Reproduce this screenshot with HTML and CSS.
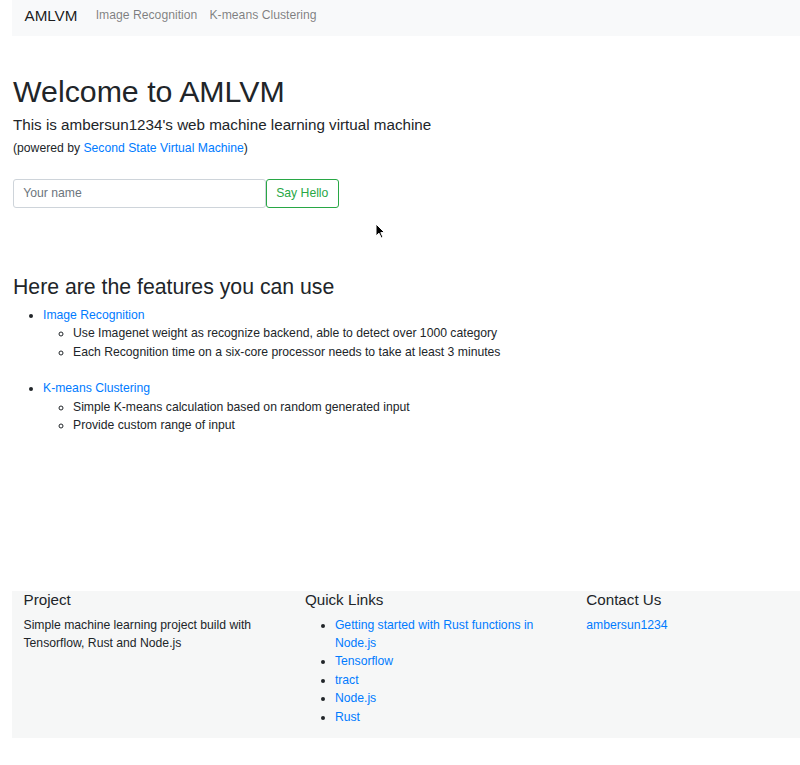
FILE: index.html
```html
<!DOCTYPE html>
<html lang="en">
<head>
<meta charset="utf-8">
<title>AMLVM</title>
<link rel="stylesheet" href="styles.css">
</head>
<body>
<div class="page">
  <nav class="navbar">
    <a class="brand" href="#">AMLVM</a>
    <a class="nav-link" href="#">Image Recognition</a>
    <a class="nav-link" href="#">K-means Clustering</a>
  </nav>

  <main class="main">
    <h1 class="title">Welcome to AMLVM</h1>
    <p class="lead">This is ambersun1234's web machine learning virtual machine</p>
    <p class="powered">(powered by <a href="#">Second State Virtual Machine</a>)</p>

    <form class="hello">
      <input class="name-input" type="text" placeholder="Your name">
      <button class="btn-hello" type="button">Say Hello</button>
    </form>

    <h3 class="features-title">Here are the features you can use</h3>
    <ul class="features">
      <li><a href="#">Image Recognition</a>
        <ul class="sub">
          <li>Use Imagenet weight as recognize backend, able to detect over 1000 category</li>
          <li>Each Recognition time on a six-core processor needs to take at least 3 minutes</li>
        </ul>
      </li>
      <li class="spacer"></li>
      <li><a href="#">K-means Clustering</a>
        <ul class="sub">
          <li>Simple K-means calculation based on random generated input</li>
          <li>Provide custom range of input</li>
        </ul>
      </li>
    </ul>
  </main>

  <footer class="footer">
    <div class="col">
      <h5 class="col-title">Project</h5>
      <p class="col-text">Simple machine learning project build with Tensorflow, Rust and Node.js</p>
    </div>
    <div class="col">
      <h5 class="col-title">Quick Links</h5>
      <ul class="links">
        <li><a href="#">Getting started with Rust functions in Node.js</a></li>
        <li><a href="#">Tensorflow</a></li>
        <li><a href="#">tract</a></li>
        <li><a href="#">Node.js</a></li>
        <li><a href="#">Rust</a></li>
      </ul>
    </div>
    <div class="col">
      <h5 class="col-title">Contact Us</h5>
      <a href="#">ambersun1234</a>
    </div>
  </footer>

  <svg class="cursor" width="12" height="17" viewBox="0 0 12 17" aria-hidden="true">
    <path d="M1 1 L1 13 L4 10.2 L6.3 15 L8 14.2 L5.8 9.6 L9.6 9.6 Z" fill="#000" stroke="#fff" stroke-width="1"/>
  </svg>
</div>
</body>
</html>
```

FILE: styles.css
```css
html, body {
  margin: 0;
  padding: 0;
  overflow: hidden;
  background: #fff;
}

body {
  font-family: "Liberation Sans", Arial, sans-serif;
  font-size: 12.2px;
  line-height: 18.4px;
  color: #212529;
}

a {
  color: #007bff;
  text-decoration: none;
}

.page {
  position: relative;
  width: 800px;
  padding-left: 12px;
  box-sizing: border-box;
  overflow: hidden;
}

.navbar {
  display: flex;
  align-items: flex-start;
  height: 36px;
  box-sizing: border-box;
  padding: 0 12px 0 12.5px;
  background: #f8f9fa;
}

.brand {
  color: rgba(0, 0, 0, 0.9);
  font-size: 15.2px;
  line-height: 23px;
  padding: 3.8px 0;
  margin-right: 12.2px;
}

.nav-link {
  color: rgba(0, 0, 0, 0.5);
  padding: 6.1px 6.1px;
  line-height: 18.4px;
}

.main {
  padding-left: 1px;
  padding-bottom: 156.5px;
}

.title {
  font-size: 30.3px;
  line-height: 36.75px;
  font-weight: 400;
  margin: 37.5px 0 2.45px;
}

.lead {
  font-size: 15.2px;
  line-height: 23px;
  margin: 0;
}

.powered {
  margin: 3.5px 0 0;
}

.hello {
  display: flex;
  margin-top: 21px;
  height: 29px;
}

.name-input {
  width: 253px;
  height: 29px;
  box-sizing: border-box;
  margin: 0;
  padding: 4.6px 9.2px;
  border: 1px solid #ced4da;
  border-radius: 3px;
  font-family: inherit;
  font-size: 12.2px;
  color: #495057;
  background: #fff;
}

.name-input::placeholder {
  color: #6c757d;
}

.btn-hello {
  height: 29px;
  box-sizing: border-box;
  margin: 0;
  padding: 4.6px 9.2px;
  border: 1px solid #28a745;
  border-radius: 3px;
  background: #fff;
  color: #28a745;
  font-family: inherit;
  font-size: 12.2px;
}

.features-title {
  font-size: 21.25px;
  line-height: 25.7px;
  font-weight: 400;
  margin: 67.5px 0 5px;
}

.features {
  margin: 0;
  padding-left: 30px;
  line-height: 18.4px;
}

.features .sub {
  margin: 0;
  padding-left: 30px;
  list-style-type: circle;
}

.features .spacer {
  list-style: none;
  height: 18.4px;
}

.footer {
  display: grid;
  grid-template-columns: 281.4px 281.4px 1fr;
  background: #f6f7f7;
}

.col {
  padding: 0 11.5px;
}

.col-title {
  font-size: 15.2px;
  line-height: 18.4px;
  font-weight: 400;
  margin: 0 0 6px;
}

.col-text {
  margin: 0 0 12px;
  line-height: 18.4px;
}

.links {
  margin: 0 0 12px;
  padding-left: 30px;
  line-height: 18.4px;
}

.cursor {
  position: absolute;
  left: 375px;
  top: 223px;
}
```
